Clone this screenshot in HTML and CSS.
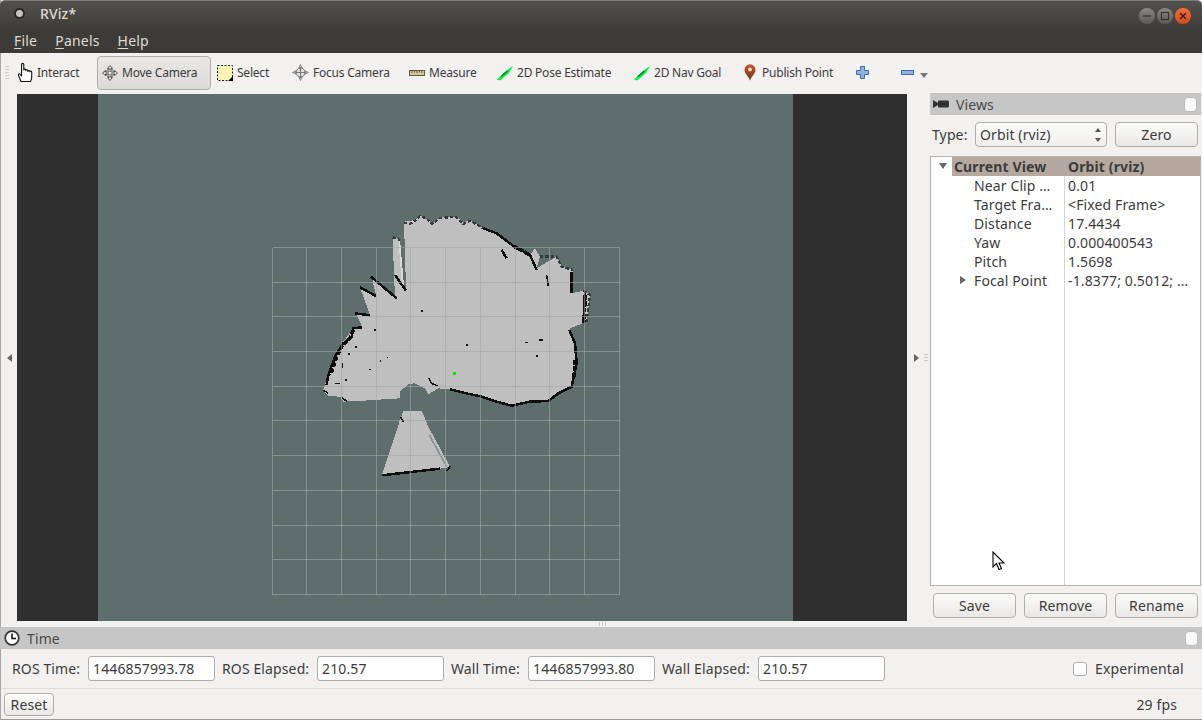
FILE: index.html
```html
<!DOCTYPE html>
<html lang="en">
<head>
<meta charset="utf-8">
<title>RViz*</title>
<link rel="stylesheet" href="styles.css">
</head>
<body>
<div class="window">
  <header class="chrome">
    <div class="titlebar">
      <span class="app-dot"></span>
      <span class="title">RViz*</span>
      <div class="win-buttons">
        <span class="win-btn"><svg width="10" height="10" viewBox="0 0 10 10"><path d="M1 5h8" stroke="#2f2f2c" stroke-width="1.2"/></svg></span>
        <span class="win-btn"><svg width="10" height="10" viewBox="0 0 10 10"><rect x="1.5" y="1.5" width="7" height="7" fill="none" stroke="#2f2f2c" stroke-width="1.1"/></svg></span>
        <span class="win-btn win-close"><svg width="10" height="10" viewBox="0 0 10 10"><path d="M2 2l6 6M8 2l-6 6" stroke="#3a1a0c" stroke-width="1.4"/></svg></span>
      </div>
    </div>
    <nav class="menubar">
      <span class="menu"><u>F</u>ile</span>
      <span class="menu"><u>P</u>anels</span>
      <span class="menu"><u>H</u>elp</span>
    </nav>
  </header>

  <div class="toolbar">
    <span class="grip"></span>
    <div class="tool t-interact">
      <svg width="17" height="21" viewBox="0 0 17 21"><path d="M4 19.5L1.5 13.5c-.6-1.4 1-2.2 1.9-1L4.6 14V2.6c0-1.6 2.2-1.6 2.2 0V8c0-1.2 2-1.2 2 0v.6c0-1.2 2-1.2 2 0v.8c0-1.2 2-1.2 2 0.2V9.800c0-1 1.900-1 1.900.4v5.300c0 1.500-.6 2.500-1.200 4z" fill="#fff" stroke="#111" stroke-width="1.1" stroke-linejoin="round"/></svg>
      <span>Interact</span>
    </div>
    <div class="tool t-move active">
      <svg width="16" height="16" viewBox="0 0 16 16"><path d="M8 .5L10.500 3.500H9V7h3.500V5.500L15.500 8l-3 2.500V9H9v3.500h1.500L8 15.500l-2.500-3H7V9H3.500v1.500L.5 8l3-2.500V7H7V3.500H5.500z" fill="#e8e8e8" stroke="#555" stroke-width="1"/><circle cx="8" cy="8" r="4" fill="none" stroke="#777"/></svg>
      <span>Move Camera</span>
    </div>
    <div class="tool t-select">
      <svg width="16" height="16" viewBox="0 0 16 16"><rect x=".5" y=".5" width="15" height="15" fill="#fbf5b4" stroke="#222" stroke-dasharray="2 1.500"/><path d="M16 11v5h-5z" fill="#000"/></svg>
      <span>Select</span>
    </div>
    <div class="tool t-focus">
      <svg width="17" height="17" viewBox="0 0 17 17"><path d="M8.500 .5l2 4h-4zM8.500 16.500l-2-4h4zM.5 8.500l4-2v4zM16.500 8.500l-4 2v-4z" fill="#bbb" stroke="#777" stroke-width=".8"/><circle cx="8.500" cy="8.500" r="4.500" fill="#ddd" stroke="#777"/><path d="M8.500 3v11M3 8.500h11" stroke="#777"/></svg>
      <span>Focus Camera</span>
    </div>
    <div class="tool t-measure">
      <svg width="16" height="16" viewBox="0 0 16 16"><rect x=".5" y="5.500" width="15" height="5" fill="#d6c98f" stroke="#5d5a4a"/><path d="M3 6v2M5.500 6v1.500M8 6v2M10.500 6v1.500M13 6v2" stroke="#5d5a4a"/></svg>
      <span>Measure</span>
    </div>
    <div class="tool t-pose">
      <svg width="16" height="16" viewBox="0 0 16 16"><path d="M0 14.500L9.500 5.500 16 1l-4 7-9 7.500z" fill="#00f23a"/><path d="M4 11.500L10.500 6" stroke="#073" stroke-width="1.300"/></svg>
      <span>2D Pose Estimate</span>
    </div>
    <div class="tool t-nav">
      <svg width="16" height="16" viewBox="0 0 16 16"><path d="M0 14.500L9.500 5.500 16 1l-4 7-9 7.500z" fill="#00f23a"/><path d="M4 11.500L10.500 6" stroke="#073" stroke-width="1.300"/></svg>
      <span>2D Nav Goal</span>
    </div>
    <div class="tool t-point">
      <svg width="14" height="17" viewBox="0 0 14 17"><defs><linearGradient id="pin" x1="0" y1="0" x2="0" y2="1"><stop offset="0" stop-color="#d4502c"/><stop offset="1" stop-color="#5f3a1c"/></linearGradient></defs><path d="M7 16.800C5.500 12 1.500 10 1.500 5.800a5.500 5.500 0 0 1 11 0C12.500 10 8.500 12 7 16.800z" fill="url(#pin)"/><circle cx="7" cy="5.500" r="1.900" fill="#f3d9c8"/></svg>
      <span>Publish Point</span>
    </div>
    <div class="tool t-plus">
      <svg width="13" height="13" viewBox="0 0 13 13"><path d="M4.500 .5h4v4h4v4h-4v4h-4v-4h-4v-4h4z" fill="#8fb2dc" stroke="#3f6cae"/></svg>
    </div>
    <div class="tool t-minus">
      <svg width="13" height="5" viewBox="0 0 13 5"><rect x=".5" y=".5" width="12" height="4" fill="#8fb2dc" stroke="#3f6cae"/></svg>
      <span class="overflow-arrow"></span>
    </div>
  </div>

  <main class="workspace">
    <div class="side-handle"><span class="arrow-left"></span></div>
    <div class="viewport">
      <svg class="scene" viewBox="17 94 890 527" width="890" height="527">
        <rect x="17" y="94" width="890" height="527" fill="#2f2f2f"/>
        <rect x="98" y="94" width="695" height="527" fill="#5e6e6c"/>
        <g transform="translate(300 200) scale(.33333)" shape-rendering="crispEdges">
          <path class="free" d="M312 65L345 60 360 47 385 60 395 72 420 52 470 50 490 68 510 60 550 85 590 100 640 135 690 165 705 145 720 170 710 205 735 190 770 170 785 200 820 210 815 280 850 272 870 285 860 365 810 385 825 430 830 490 815 560 775 580 745 603 690 605 635 617 590 605 545 590 490 578 450 568 415 565 385 583 375 565 345 550 325 552 300 575 300 595 250 598 175 603 130 605 120 590 85 588 70 570 85 525 105 470 130 425 160 385 185 378 170 345 210 345 180 262 228 285 215 230 290 295 285 225 318 265z"/>
          <path class="free" d="M278 112L300 118 312 255 318 280 285 290 282 225z"/>
          <path class="free" d="M310 632L365 632 385 680 450 800 440 803 420 806 245 828 300 660z"/>
          <path class="sliver" d="M300 118L312 255 305 245 296 130z"/>
          <path class="fuzz" d="M312 68L330 72 345 62 360 48 378 55 395 72 420 55 445 52 470 52 490 72 510 62 550 85M278 112L300 120M720 170L770 170 785 200 820 210M850 272L870 285 860 365"/>
          <path class="streak" d="M388 705L440 800"/>
          <path class="wall" d="M550 85L590 100 640 138 690 165 710 210M213 230L290 295M180 262L228 288M165 340L210 346M285 225L318 272M605 150L620 175M245 826L420 806"/>
          <path class="wall" d="M185 382L160 385 155 410 130 430 105 470 85 525 80 555M815 215L815 280M855 280L850 370M808 390L825 430 830 490 815 560 775 580 745 603 690 605 635 617 590 605 545 590 490 578 450 568"/>
          <path class="wall heavy" d="M160 390L150 415 128 435 108 475 92 525M640 138L690 165M825 480L822 530M856 285L852 365"/>
          <path class="wall thin" d="M385 533L395 550 412 558M302 650L310 665M440 812L452 798M70 570L85 580M125 592L140 604M740 225L745 258"/>
          <g class="specks">
            <rect x="362" y="331" width="6" height="6"/><rect x="222" y="387" width="6" height="6"/><rect x="497" y="432" width="6" height="6"/>
            <rect x="676" y="425" width="9" height="5"/><rect x="717" y="417" width="12" height="6"/><rect x="708" y="464" width="6" height="6"/>
            <rect x="239" y="480" width="4" height="6"/><rect x="261" y="470" width="3" height="3"/><rect x="207" y="506" width="6" height="3"/>
            <rect x="145" y="459" width="6" height="5"/><rect x="135" y="537" width="6" height="6"/><rect x="105" y="548" width="15" height="3"/>
            <rect x="165" y="437" width="6" height="6"/><rect x="125" y="490" width="3" height="15"/>
          </g>
          <rect x="459" y="516" width="9" height="9" fill="#00e800"/>
        </g>
        <g class="grid" shape-rendering="crispEdges">
          <path d="M272.500 247.500H619.500M272.500 282.500H619.500M272.500 316.500H619.500M272.500 351.500H619.500M272.500 386.500H619.500M272.500 420.500H619.500M272.500 455.500H619.500M272.500 490.500H619.500M272.500 525.500H619.500M272.500 559.500H619.500M271.500 594.500H619.500"/>
          <path d="M272.500 247.500V594.500M306.500 247.500V594.500M341.500 247.500V594.500M376.500 247.500V594.500M410.500 247.500V594.500M445.500 247.500V594.500M480.500 247.500V594.500M515.500 247.500V594.500M549.500 247.500V594.500M584.500 247.500V594.500M619.500 247.500V594.500"/>
        </g>
      </svg>
    </div>
    <div class="side-handle right"><span class="arrow-right"></span><span class="dots"></span></div>
    <aside class="views">
      <div class="dock-title">
        <svg width="16" height="8" viewBox="0 0 16 8"><path d="M0 0l5 3V1.500h0c0-.5.5-1 1-1h8.500c.8 0 1.500.7 1.500 1.500v4c0 .8-.7 1.500-1.500 1.500H6c-.5 0-1-.5-1-1V5L0 8z" fill="#333"/></svg>
        <span class="dock-name">Views</span>
        <span class="dock-close"></span>
      </div>
      <div class="type-row">
        <label>Type:</label>
        <div class="combo"><span>Orbit (rviz)</span><span class="spin"></span></div>
        <button class="btn zero">Zero</button>
      </div>
      <div class="tree">
        <div class="row head"><span class="twist down"></span><span class="name">Current View</span><span class="value">Orbit (rviz)</span></div>
        <div class="row"><span class="name">Near Clip …</span><span class="value">0.01</span></div>
        <div class="row"><span class="name">Target Fra…</span><span class="value">&lt;Fixed Frame&gt;</span></div>
        <div class="row"><span class="name">Distance</span><span class="value">17.4434</span></div>
        <div class="row"><span class="name">Yaw</span><span class="value">0.000400543</span></div>
        <div class="row"><span class="name">Pitch</span><span class="value">1.5698</span></div>
        <div class="row"><span class="twist side"></span><span class="name">Focal Point</span><span class="value">-1.8377; 0.5012; …</span></div>
        <svg class="cursor" width="14" height="20" viewBox="0 0 14 20"><path d="M1 1v15l3.500-3.500L7 18.500l2.500-1L7 12h5z" fill="#fff" stroke="#000" stroke-width="1.100"/></svg>
      </div>
      <div class="view-actions">
        <button class="btn">Save</button>
        <button class="btn">Remove</button>
        <button class="btn">Rename</button>
      </div>
    </aside>
  </main>

  <div class="splitter"><span class="split-dots"></span></div>

  <section class="time">
    <div class="dock-title time-title">
      <svg width="16" height="16" viewBox="0 0 16 16"><circle cx="8" cy="8" r="6.800" fill="#fff" stroke="#333" stroke-width="1.700"/><path d="M8 3.500V8.500H12" fill="none" stroke="#111" stroke-width="1.500"/></svg>
      <span class="dock-name">Time</span>
      <span class="dock-close"></span>
    </div>
    <div class="time-row">
      <label class="l1">ROS Time:</label><span class="field">1446857993.78</span>
      <label class="l2">ROS Elapsed:</label><span class="field">210.57</span>
      <label class="l3">Wall Time:</label><span class="field">1446857993.80</span>
      <label class="l4">Wall Elapsed:</label><span class="field">210.57</span>
      <span class="check"></span><label class="exp">Experimental</label>
    </div>
  </section>

  <footer class="statusbar">
    <button class="btn reset">Reset</button>
    <span class="fps">29 fps</span>
  </footer>
</div>
</body>
</html>
```

FILE: styles.css
```css
* { box-sizing: border-box; }
html, body { margin: 0; padding: 0; background: #f2f1f0; }
body { width: 1202px; height: 720px; overflow: hidden; font-family: "Noto Sans", sans-serif; font-size: 14px; letter-spacing: .12px; color: #3c3c3c; }
.window { width: 1202px; height: 720px; display: flex; flex-direction: column; border-bottom: 1px solid #9c9b99; border-left: 1px solid #a8a7a5; }

.chrome { height: 53px; margin-left: -1px; background: linear-gradient(#52514c, #3c3b37 60%); border-top: 1px solid #7b7a75; border-radius: 5px 5px 0 0; flex: none; }
.titlebar { height: 25px; display: flex; align-items: center; padding-left: 13px; }
.app-dot { width: 13px; height: 13px; border-radius: 50%; background: radial-gradient(circle, #c4c4c2 0 3px, #2c2b28 4px 5px, #55544f 6.500px); }
.title { margin-left: 14px; color: #dfdbd2; font-size: 14px; font-weight: 500; }
.win-buttons { margin-left: auto; margin-right: 11px; display: flex; gap: 2px; padding-top: 4px; }
.win-btn { width: 16px; height: 16px; border-radius: 50%; background: linear-gradient(#8a8984, #5a5955); display: flex; align-items: center; justify-content: center; }
.win-close { background: linear-gradient(#f0703c, #d9481a); }
.menubar { height: 27px; display: flex; align-items: center; padding: 2px 0 0 14px; gap: 18px; color: #dfdbd2; font-size: 14px; letter-spacing: .2px; }
.menu u { text-underline-offset: 2px; }

.toolbar { height: 41px; flex: none; display: flex; align-items: center; padding: 0 0 2px 4px; position: relative; font-size: 12px; letter-spacing: -.22px; }
.grip { width: 4px; height: 14px; margin-right: 8px; background: repeating-linear-gradient(#cfcecc 0 1px, transparent 1px 3px); }
.tool { display: flex; align-items: center; gap: 4px; height: 34px; flex: none; white-space: nowrap; }
.t-interact { width: 80px; gap: 3px; }
.t-move { width: 114px; padding-left: 4px; justify-content: flex-start; border: 1px solid #b0aeab; border-radius: 4px; background: linear-gradient(#e9e8e6, #dcdad8); }
.t-select { width: 75px; margin-left: 6px; }
.t-focus { width: 117px; }
.t-measure { width: 88px; }
.t-pose { width: 137px; }
.t-nav { width: 109px; }
.t-point { width: 113px; gap: 5px; }
.t-plus { width: 45px; }
.t-minus { width: 30px; gap: 6px; }
.overflow-arrow { width: 0; height: 0; margin-top: 5px; border: 4px solid transparent; border-top: 5px solid #777; border-bottom: 0; }

.workspace { height: 527px; flex: none; display: flex; }
.side-handle { width: 16px; flex: none; display: flex; align-items: center; justify-content: center; position: relative; }
.side-handle.right { width: 23px; justify-content: flex-start; padding-left: 7px; gap: 5px; }
.arrow-left { border: 4px solid transparent; border-right: 5px solid #666; border-left: 0; }
.arrow-right { border: 4px solid transparent; border-left: 5px solid #666; border-right: 0; }
.dots { width: 4px; height: 8px; background: repeating-linear-gradient(#c8c7c5 0 1px, transparent 1px 3px); }
.viewport { width: 890px; height: 527px; flex: none; }
.scene { display: block; }
.free { fill: #bfbfbf; }
.sliver { fill: #d8d8d8; }
.fuzz { fill: none; stroke: #333a39; stroke-width: 7; stroke-dasharray: 10 6; }
.streak { fill: none; stroke: #8b9291; stroke-width: 5; }
.wall { fill: none; stroke: #0e0e0e; stroke-width: 7.500; stroke-linejoin: round; }
.wall.thin { stroke-width: 4.500; }
.wall.heavy { stroke-width: 11; stroke-dasharray: 14 5; }
.specks rect { fill: #111; }
.grid path { fill: none; stroke: #a0a8a6; stroke-opacity: .6; stroke-width: 1; }

.views { width: 271px; height: 534px; margin-top: -1px; flex: none; display: flex; flex-direction: column; }
.dock-title { height: 22px; flex: none; background: #c6c6c6; display: flex; align-items: center; padding-left: 3px; gap: 7px; position: relative; }
.dock-name { font-size: 14px; color: #4a4a4a; }
.dock-close { width: 13px; height: 15px; margin-left: auto; margin-right: 4px; background: #fafafa; border: 1px solid #bbb; border-radius: 4px; }
.type-row { height: 41px; flex: none; display: flex; align-items: center; padding: 0 0 2px 2px; }
.type-row label { width: 43px; flex: none; }
.combo { width: 132px; flex: none; height: 25px; border: 1px solid #b0aeab; border-radius: 4px; background: linear-gradient(#fbfbfa, #f0efee); display: flex; align-items: center; padding-left: 4px; position: relative; }
.spin { position: absolute; right: 4px; top: 6px; width: 7px; height: 12px; }
.spin::before, .spin::after { content: ""; position: absolute; left: 0; border: 3.500px solid transparent; }
.spin::before { top: -1px; border-bottom: 4px solid #555; border-top: 0; }
.spin::after { bottom: -1px; border-top: 4px solid #555; border-bottom: 0; }
.btn { font: inherit; letter-spacing: inherit; color: #3c3c3c; height: 25px; padding: 0; border: 1px solid #b0aeab; border-radius: 4px; background: linear-gradient(#fbfbfa, #e9e8e6); }
.zero { width: 83px; flex: none; margin-left: 8px; }

.tree { height: 430px; flex: none; border: 1px solid #b4b3b1; background: linear-gradient(#d6d5d3, #d6d5d3) 133px 0 / 1px 100% no-repeat #fff; position: relative; }
.row { height: 19px; display: flex; align-items: center; position: relative; }
.row.head { background: linear-gradient(#b5a99f, #b5a99f) 21px 0 / 100% 100% no-repeat; font-weight: 700; height: 19px; }
.name { width: 94px; margin-left: 43px; white-space: nowrap; flex: none; }
.value { margin-left: -3px; padding-left: 3px; position: absolute; left: 137px; white-space: nowrap; }
.head .name { margin-left: 23px; width: 110px; }
.twist { position: absolute; }
.twist.down { left: 8px; top: 6px; border: 4px solid transparent; border-top: 6px solid #666; border-bottom: 0; }
.twist.side { left: 29px; top: 5px; border: 4px solid transparent; border-left: 6px solid #666; border-right: 0; }
.cursor { position: absolute; left: 61px; top: 394px; }
.view-actions { height: 41px; flex: none; display: flex; align-items: flex-start; gap: 8px; padding: 7px 0 0 3px; }
.view-actions .btn { width: 83px; }

.splitter { height: 6px; flex: none; position: relative; }
.split-dots { position: absolute; left: 598px; top: 1px; width: 7px; height: 4px; background: repeating-linear-gradient(90deg, #c8c7c5 0 1px, transparent 1px 3px); }
.time { flex: none; }
.time-title { padding-left: 4px; gap: 7px; margin-left: -1px; }
.time-row { height: 40px; display: flex; align-items: center; border-bottom: 1px solid #dddcda; }
.time-row label { white-space: nowrap; }
.l1 { margin-left: 11px; width: 76px; }
.l2 { margin-left: 7px; width: 95px; }
.l3 { margin-left: 7px; width: 77px; }
.l4 { margin-left: 7px; width: 96px; }
.field { width: 127px; height: 25px; background: #fff; border: 1px solid #b0aeab; border-radius: 3px; padding: 0 4px; line-height: 23px; }
.check { width: 14px; height: 14px; margin-left: 188px; border: 1px solid #aaa; border-radius: 3px; background: #fff; }
.exp { margin-left: 8px; }

.statusbar { flex: 1; display: flex; align-items: center; justify-content: space-between; padding: 0 25px 0 3px; }
.reset { width: 50px; height: 23px; }
```
